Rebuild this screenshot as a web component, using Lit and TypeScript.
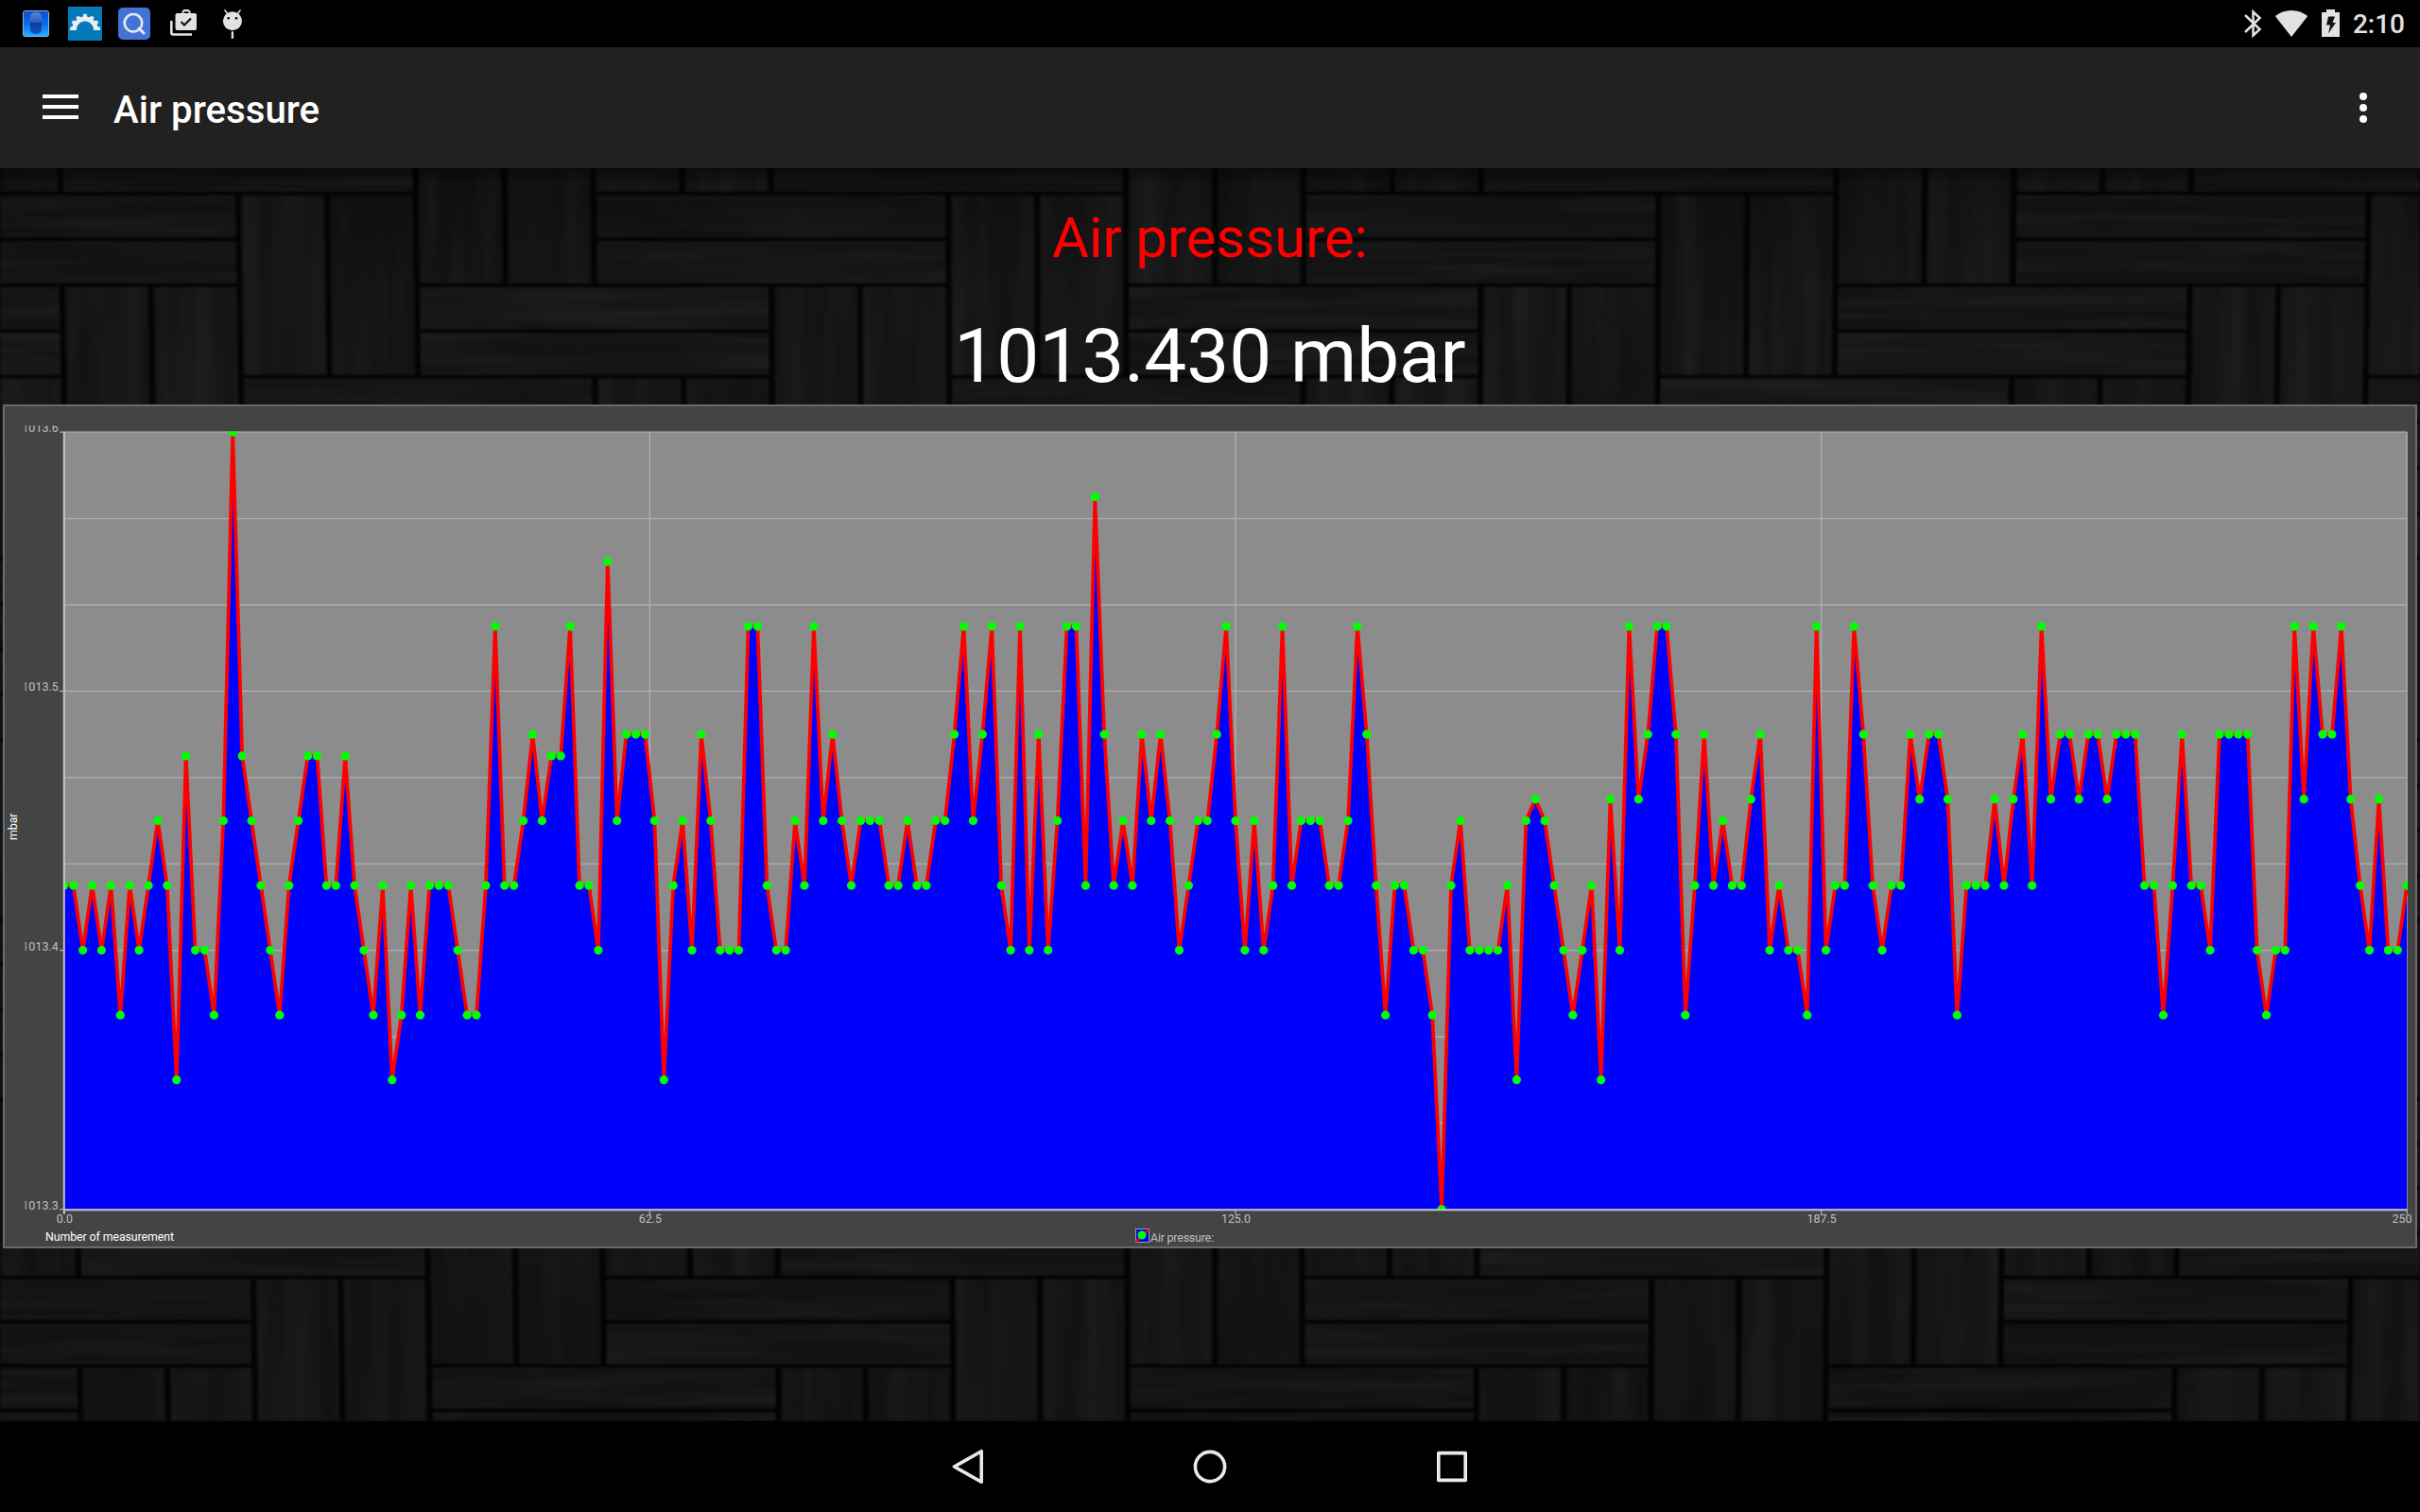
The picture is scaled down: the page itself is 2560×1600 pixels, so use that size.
import { css, html, LitElement, svg } from "lit";
import { customElement, property } from "lit/decorators.js";

// one step is a twelfth of 0.1 mbar above 1013.3
const READINGS = [
  15, 15, 12, 15, 12, 15, 9, 15, 12, 15, 18, 15, 6, 21, 12, 12, 9, 18, 36, 21, 18, 15, 12, 9, 15,
  18, 21, 21, 15, 15, 21, 15, 12, 9, 15, 6, 9, 15, 9, 15, 15, 15, 12, 9, 9, 15, 27, 15, 15, 18,
  22, 18, 21, 21, 27, 15, 15, 12, 30, 18, 22, 22, 22, 18, 6, 15, 18, 12, 22, 18, 12, 12, 12, 27, 27,
  15, 12, 12, 18, 15, 27, 18, 22, 18, 15, 18, 18, 18, 15, 15, 18, 15, 15, 18, 18, 22, 27, 18, 22, 27,
  15, 12, 27, 12, 22, 12, 18, 27, 27, 15, 33, 22, 15, 18, 15, 22, 18, 22, 18, 12, 15, 18, 18, 22, 27,
  18, 12, 18, 12, 15, 27, 15, 18, 18, 18, 15, 15, 18, 27, 22, 15, 9, 15, 15, 12, 12, 9, 0, 15, 18,
  12, 12, 12, 12, 15, 6, 18, 19, 18, 15, 12, 9, 12, 15, 6, 19, 12, 27, 19, 22, 27, 27, 22, 9, 15,
  22, 15, 18, 15, 15, 19, 22, 12, 15, 12, 12, 9, 27, 12, 15, 15, 27, 22, 15, 12, 15, 15, 22, 19, 22,
  22, 19, 9, 15, 15, 15, 19, 15, 19, 22, 15, 27, 19, 22, 22, 19, 22, 22, 19, 22, 22, 22, 15, 15, 9,
  15, 22, 15, 15, 12, 22, 22, 22, 22, 12, 9, 12, 12, 27, 19, 27, 22, 22, 27, 19, 15, 12, 19, 12, 12,
  15,
];

@customElement('plank-wall')
export class PlankWall extends LitElement {

  static styles = css`
    :host {
      display: block;
    }

    svg {
      display: block;
    }

    .gap {
      fill: #040404;
    }
  `;

  render() {
    const across = [];
    const upright = [];

    for (let row = -8; row < 32; row += 8) {
      for (let col = -8; col < 32; col += 8) {
        for (let i = 0; i < 4; i++) {
          const r = row + i * 2;
          const c = col + 6 - i * 2;
          across.push(this._plank(c, r, 4, 1), this._plank(c, r + 1, 4, 1));
          upright.push(this._plank(c - 4, r, 1, 4), this._plank(c - 3, r, 1, 4));
        }
      }
    }

    return html`
      <svg width="2560" height="1326" viewBox="0 178 2560 1326">
        <defs>
          <filter id="grain-x" filterUnits="userSpaceOnUse" x="0" y="178" width="2560" height="1326" color-interpolation-filters="sRGB">
            <feTurbulence type="fractalNoise" baseFrequency="0.004 0.08" numOctaves="3" seed="4"></feTurbulence>
            <feColorMatrix values="0 0 0 0 1  0 0 0 0 1  0 0 0 0 1  .08 0 0 0 -.024"></feColorMatrix>
            <feComposite in2="SourceAlpha" operator="in" result="grain"></feComposite>
            <feMerge>
              <feMergeNode in="SourceGraphic"></feMergeNode>
              <feMergeNode in="grain"></feMergeNode>
            </feMerge>
            <feGaussianBlur stdDeviation="1.1"></feGaussianBlur>
          </filter>
          <filter id="grain-y" filterUnits="userSpaceOnUse" x="0" y="178" width="2560" height="1326" color-interpolation-filters="sRGB">
            <feTurbulence type="fractalNoise" baseFrequency="0.04 0.003" numOctaves="3" seed="9"></feTurbulence>
            <feColorMatrix values="0 0 0 0 1  0 0 0 0 1  0 0 0 0 1  .08 0 0 0 -.024"></feColorMatrix>
            <feComposite in2="SourceAlpha" operator="in" result="grain"></feComposite>
            <feMerge>
              <feMergeNode in="SourceGraphic"></feMergeNode>
              <feMergeNode in="grain"></feMergeNode>
            </feMerge>
            <feGaussianBlur stdDeviation="1.6 1"></feGaussianBlur>
          </filter>
          <linearGradient id="shade" x1="0" y1="0" x2="0" y2="1">
            <stop offset="0" stop-color="#000" stop-opacity=".55"></stop>
            <stop offset=".012" stop-color="#000" stop-opacity=".22"></stop>
            <stop offset=".1" stop-color="#000" stop-opacity=".04"></stop>
            <stop offset=".5" stop-color="#000" stop-opacity="0"></stop>
            <stop offset="1" stop-color="#000" stop-opacity=".14"></stop>
          </linearGradient>
        </defs>
        <rect class="gap" x="0" y="178" width="2560" height="1326"></rect>
        <g filter="url(#grain-x)">${across}</g>
        <g filter="url(#grain-y)">${upright}</g>
        <rect x="0" y="178" width="2560" height="1326" fill="url(#shade)"></rect>
      </svg>
    `;
  }

  // the wall leans back a little, so the steps shrink towards the bottom
  private _x(col: number, row: number) {
    return 1285 + (col - 13) * (93.9 - 0.06 * row);
  }

  private _y(row: number) {
    return 204.7 + 48.6 * row - 0.0337 * row * row;
  }

  private _plank(col: number, row: number, cols: number, rows: number) {
    const gx = 3;
    const gy = 1.8;
    const top = this._y(row) + gy;
    const bottom = this._y(row + rows) - gy;
    const points = [
      [this._x(col, row) + gx, top],
      [this._x(col + cols, row) - gx, top],
      [this._x(col + cols, row + rows) - gx, bottom],
      [this._x(col, row + rows) + gx, bottom],
    ];
    const tone = 19 + (((col * 7 + row * 5) % 3) + 3) % 3;

    return svg`<polygon points=${points.join(' ')} fill="rgb(${tone},${tone},${tone})"></polygon>`;
  }
}

@customElement('pressure-chart')
export class PressureChart extends LitElement {

  @property({ type: Array })
  readings: number[] = [];

  static styles = css`
    :host {
      display: block;
      box-sizing: border-box;
      background: #444444;
      border: 2px solid #6b6b6b;
      font-family: Roboto, sans-serif;
    }

    svg {
      display: block;
    }

    .plot {
      fill: #8c8c8c;
    }

    .grid {
      stroke: #b0b0b0;
      stroke-width: 1.3;
    }

    .axis {
      stroke: #c4c4c4;
      stroke-width: 2;
    }

    .area {
      fill: #0000ff;
    }

    .line {
      fill: none;
      stroke: #ff0000;
      stroke-width: 3.7;
      stroke-linejoin: bevel;
    }

    .dot {
      fill: #00ff00;
    }

    .tick {
      fill: #c0c0c0;
      font-size: 12.4px;
    }

    .name {
      fill: #ffffff;
      font-size: 12.4px;
    }
  `;

  private readonly left = 67.8;
  private readonly right = 2546.2;
  private readonly top = 457.2;
  private readonly bottom = 1279.8;

  render() {
    const points = this.readings.map((value, i) => [this._x(i), this._y(value)]);
    const line = points.map(([x, y]) => `${x.toFixed(1)},${y.toFixed(1)}`).join(' ');
    const rows = Array.from({ length: 10 }, (_, i) => this._y(i * 4));
    const cols = [0, 62.5, 125, 187.5, 250];

    return html`
      <svg width="2550" height="889" viewBox="5 430 2550 889">
        <defs>
          <clipPath id="plot"><rect x="67" y="456.5" width="2480" height="823.5"></rect></clipPath>
          <clipPath id="labels"><rect x="26.5" y="450.3" width="40" height="860"></rect></clipPath>
        </defs>
        <rect class="plot" x=${this.left} y=${this.top} width=${this.right - this.left} height=${this.bottom - this.top}></rect>
        ${rows.map((y) => svg`<line class="grid" x1=${this.left} x2=${this.right} y1=${y} y2=${y}></line>`)}
        ${cols.map((c) => svg`<line class="grid" x1=${this._x(c)} x2=${this._x(c)} y1=${this.top} y2=${this.bottom + 5}></line>`)}

        <g clip-path="url(#plot)">
          <polygon class="area" points="${this.left},${this.bottom} ${line} ${this.right},${this.bottom}"></polygon>
          <polyline class="line" points=${line}></polyline>
          ${points.map(([x, y]) => svg`<circle class="dot" cx=${x} cy=${y} r="4.6"></circle>`)}
        </g>

        <line class="axis" x1=${this.left} x2=${this.left} y1=${this.top} y2=${this.bottom + 5}></line>
        <line class="axis" x1=${this.left} x2=${this.right} y1=${this.bottom + 0.5} y2=${this.bottom + 0.5}></line>

        <g clip-path="url(#labels)">
          ${['1013.3', '1013.4', '1013.5', '1013.6'].map((label, i) => svg`
            <text class="tick" x="61.8" y=${this._y(i * 12)} text-anchor="end" textLength="38.5">${label}</text>
          `)}
        </g>
        ${[0, 12, 24, 36].map((v) => svg`<line class="grid" x1="63" x2="68" y1=${this._y(v)} y2=${this._y(v)}></line>`)}
        ${cols.slice(0, 4).map((c) => svg`<text class="tick" x=${this._x(c) + 0.5} y="1294" text-anchor="middle">${c.toFixed(1)}</text>`)}
        <text class="tick" x="2551.5" y="1294" text-anchor="end">250</text>

        <text class="name" x="48" y="1313.2" textLength="136">Number of measurement</text>
        <text class="name" transform="translate(18.4 889) rotate(-90)" textLength="28.5">mbar</text>

        <rect x="1201.5" y="1300.5" width="14" height="14" fill="#0000e0" stroke="#9a9ad0"></rect>
        <path d="M1202 1314L1215 1301" stroke="#e00020" stroke-width="3"></path>
        <circle class="dot" cx="1208" cy="1307" r="4.5"></circle>
        <text class="tick" x="1217" y="1314.2" textLength="67">Air pressure:</text>
      </svg>
    `;
  }

  private _x(index: number) {
    return this.left + (index * (this.right - this.left)) / 250;
  }

  private _y(value: number) {
    return this.bottom - (value * (this.bottom - this.top)) / 36;
  }
}

@customElement('status-bar')
export class StatusBar extends LitElement {

  static styles = css`
    :host {
      display: flex;
      justify-content: space-between;
      align-items: center;
      box-sizing: border-box;
      height: 50px;
      padding: 0 16px 0 20px;
      background: #000000;
      color: #e2e2e2;
      font: 500 28px/50px Roboto, sans-serif;
    }

    svg {
      display: block;
    }

    .group {
      display: flex;
      align-items: center;
      height: 50px;
    }

    .notifications {
      gap: 16px;
    }

    .system {
      gap: 12px;
    }

    .battery {
      margin-left: 1px;
    }

    .clock {
      padding: 2px 0 0 2px;
    }
  `;

  render() {
    return html`
      <div class="group notifications">
        <svg width="36" height="36" viewBox="20 7 36 36">
          <defs>
            <linearGradient id="tile" x1="0" y1="0" x2="0" y2="1">
              <stop offset="0" stop-color="#0a50c8"></stop>
              <stop offset=".5" stop-color="#0a6ae8"></stop>
              <stop offset="1" stop-color="#22b4ff"></stop>
            </linearGradient>
            <linearGradient id="pill" x1="0" y1="0" x2="0" y2="1">
              <stop offset="0" stop-color="#4f86d8"></stop>
              <stop offset=".45" stop-color="#2c62c0"></stop>
              <stop offset=".5" stop-color="#0c3c9c"></stop>
              <stop offset="1" stop-color="#0a55c4"></stop>
            </linearGradient>
          </defs>
          <rect x="24.5" y="11.5" width="27" height="27" rx="2" fill="url(#tile)" stroke="#8fb4dc"></rect>
          <rect x="32" y="13" width="12" height="23" rx="5" fill="url(#pill)"></rect>
        </svg>
        <svg width="36" height="36" viewBox="72 7 36 36">
          <rect x="72" y="7" width="36" height="36" fill="#0679b8"></rect>
          <path
            fill="#e8eef2"
            d="M74 32l.3-3.300 2.400-.7.6-2-1.600-2.300 1.300-2 3.300.3 1-1.300-1-2.700 2.700-1 3 1.300 1.700-.6.6-2.900h3.400l.6 2.900
              1.700.6 3-1.300 2.700 1-1 2.700 1 1.300 3.300-.3 1.300 2-1.600 2.300.6 2 2.500.7.2 3.300h-7l-.3-3c-1.700-4-4.700-6.500-8.700-6.500
              s-7.500 2.500-8.700 6.500l-.3 3z"
          ></path>
        </svg>
        <svg width="36" height="36" viewBox="124 7 36 36">
          <rect x="125" y="8" width="34" height="34" rx="5" fill="#4373d6"></rect>
          <circle cx="141" cy="24.300" r="9.300" fill="none" stroke="#e8e8ee" stroke-width="2.600"></circle>
          <path d="M147 30l5 5" stroke="#e8e8ee" stroke-width="3" stroke-linecap="round"></path>
        </svg>
        <svg width="36" height="36" viewBox="176 7 36 36">
          <path fill="#e2e2e2" fill-rule="evenodd" d="M187.500 14h5v-2l2-2h5l2 2v2h4.500q2 0 2 2v14q0 2-2 2h-18.500q-2 0-2-2v-14q0-2 2-2zM194.500 14h5v-1.800h-5z"></path>
          <path fill="none" stroke="#e2e2e2" stroke-width="2.600" d="M181.300 22v12.500q0 2 2 2H203"></path>
          <path fill="none" stroke="#111" stroke-width="2.200" d="M191.500 23l3.500 3.500 7-7"></path>
        </svg>
        <svg width="36" height="36" viewBox="228 7 36 36">
          <circle cx="245.900" cy="22.200" r="10" fill="#e2e2e2"></circle>
          <path stroke="#e2e2e2" stroke-width="1.600" stroke-linecap="round" d="M238 11l3 4M254 11l-3 4"></path>
          <path stroke="#e2e2e2" stroke-width="2.400" d="M245.900 33.300v7.500"></path>
          <circle cx="241.700" cy="19.300" r="1.300" fill="#000"></circle>
          <circle cx="250" cy="19.300" r="1.300" fill="#000"></circle>
        </svg>
      </div>
      <div class="group system">
        <svg width="22" height="30" viewBox="2372 10 22 30">
          <path fill="none" stroke="#e2e2e2" stroke-width="2.500" d="M2375 16l15.500 15-7 6.500v-25l7 6.500-15.500 15"></path>
        </svg>
        <svg width="36" height="30" viewBox="2406 10 36 30">
          <path fill="#e2e2e2" d="M2424 39l-17.200-22c10-8 24.400-8 34.400 0z"></path>
        </svg>
        <svg class="battery" width="20" height="30" viewBox="2455 10 20 30">
          <path fill="#e2e2e2" d="M2461 10h9v3h5v26h-19v-26h5z"></path>
          <path fill="#111" d="M2463 17.500h7l-2.500 6.500h3.500l-8 11.500 2-9h-4z"></path>
        </svg>
        <span class="clock">2:10</span>
      </div>
    `;
  }
}

@customElement('app-toolbar')
export class AppToolbar extends LitElement {

  @property({ type: String })
  heading = '';

  static styles = css`
    :host {
      display: flex;
      align-items: center;
      box-sizing: border-box;
      height: 128px;
      padding: 0 52px 0 45px;
      background: #212121;
      color: #ffffff;
      font-family: Roboto, sans-serif;
    }

    .menu {
      display: flex;
      flex-direction: column;
      gap: 7px;
      width: 38px;
      margin-top: -2px;
    }

    .bar {
      height: 4px;
      background: #ffffff;
    }

    .heading {
      flex: 1;
      padding: 6px 0 0 37px;
      font-size: 40.2px;
      font-weight: 500;
      line-height: 48px;
    }

    .more {
      display: flex;
      flex-direction: column;
      gap: 4px;
      padding: 0 4px;
    }

    .dot {
      width: 8px;
      height: 8px;
      border-radius: 50%;
      background: #ffffff;
    }
  `;

  render() {
    return html`
      <div class="menu">
        <div class="bar"></div>
        <div class="bar"></div>
        <div class="bar"></div>
      </div>
      <div class="heading">${this.heading}</div>
      <div class="more">
        <div class="dot"></div>
        <div class="dot"></div>
        <div class="dot"></div>
      </div>
    `;
  }
}

@customElement('nav-bar')
export class NavBar extends LitElement {

  static styles = css`
    :host {
      display: flex;
      justify-content: center;
      align-items: center;
      gap: 208px;
      height: 96px;
      background: #000000;
    }

    svg {
      display: block;
      fill: none;
      stroke: #e9e9e9;
      stroke-width: 3.6;
      stroke-linejoin: round;
    }
  `;

  render() {
    return html`
      <svg width="48" height="48" viewBox="0 0 48 48"><path d="M38.200 7.700v32.600L9.500 24z"></path></svg>
      <svg width="48" height="48" viewBox="0 0 48 48"><circle cx="24" cy="24" r="15.600"></circle></svg>
      <svg width="48" height="48" viewBox="0 0 48 48"><rect x="9.800" y="9.600" width="28.400" height="28.800"></rect></svg>
    `;
  }
}

@customElement('app-root')
export class AppRoot extends LitElement {

  static styles = css`
    :host {
      display: flex;
      flex-direction: column;
      width: 2560px;
      height: 1600px;
      overflow: hidden;
      background: #000000;
      font-family: Roboto, sans-serif;
    }

    .content {
      position: relative;
      flex: 1;
      display: flex;
      flex-direction: column;
      overflow: hidden;
    }

    .wall {
      position: absolute;
      inset: 0;
    }

    .readout {
      position: relative;
      display: flex;
      flex-direction: column;
      align-items: center;
      gap: 43px;
      box-sizing: border-box;
      height: 250px;
      padding-top: 39px;
    }

    .label {
      color: #ff0000;
      font-size: 59.8px;
      line-height: 70px;
    }

    .value {
      color: #ffffff;
      font-size: 80px;
      line-height: 94px;
    }

    .chart {
      position: relative;
      height: 893px;
      margin: 0 3px;
    }
  `;

  render() {
    return html`
      <status-bar></status-bar>
      <app-toolbar heading="Air pressure"></app-toolbar>
      <main class="content">
        <plank-wall class="wall"></plank-wall>
        <div class="readout">
          <div class="label">Air pressure:</div>
          <div class="value">1013.430 mbar</div>
        </div>
        <pressure-chart class="chart" .readings=${READINGS}></pressure-chart>
      </main>
      <nav-bar></nav-bar>
    `;
  }
}

declare global {
  interface HTMLElementTagNameMap {
    'app-root': AppRoot;
    'app-toolbar': AppToolbar;
    'nav-bar': NavBar;
    'plank-wall': PlankWall;
    'pressure-chart': PressureChart;
    'status-bar': StatusBar;
  }
}
